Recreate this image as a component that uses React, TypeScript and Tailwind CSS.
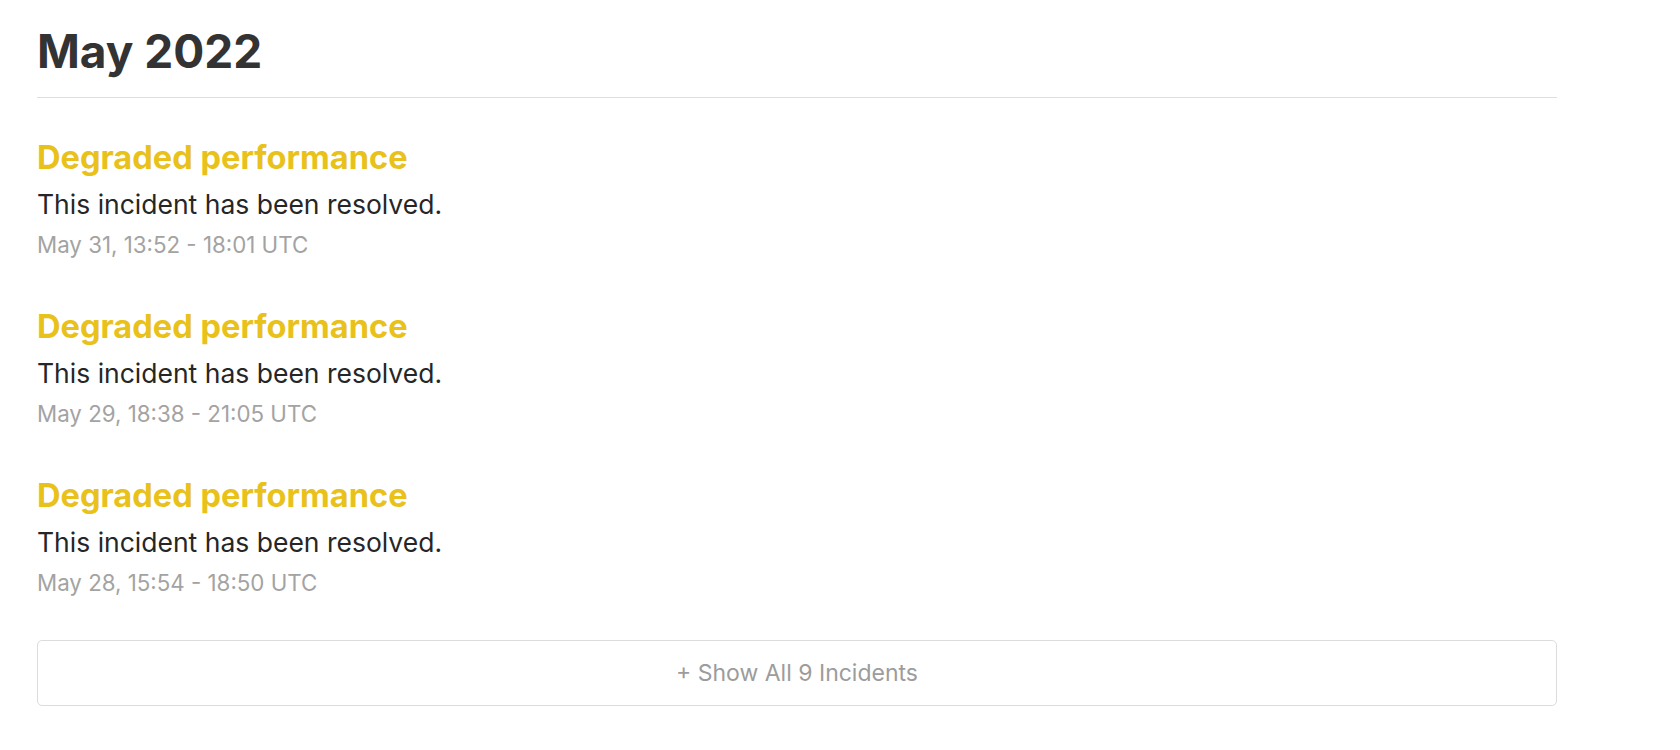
import React from "react";

const incidents = [
  { title: "Degraded performance", body: "This incident has been resolved.", date: "May 31, 13:52 - 18:01 UTC" },
  { title: "Degraded performance", body: "This incident has been resolved.", date: "May 29, 18:38 - 21:05 UTC" },
  { title: "Degraded performance", body: "This incident has been resolved.", date: "May 28, 15:54 - 18:50 UTC" },
];

export default function App() {
  return (
    <div className="min-h-[750px] w-full bg-white font-[Inter,sans-serif]">
      <div className="ml-[37px] w-[1520px] pt-[23px]">
        <h2 className="text-[46px] font-bold leading-[56px] text-[#333333] pb-[18px] border-b border-[#dedede]">
          May 2022
        </h2>
        <div className="pt-[39px] flex flex-col gap-[46px]">
          {incidents.map((it, i) => (
            <div key={i} className="flex flex-col">
              <div className="text-[32.6px] font-bold leading-[40px] text-[#e9c11b]">{it.title}</div>
              <div className="mt-[9px] text-[26.5px] leading-[36px] text-[#262626]">{it.body}</div>
              <div className="mt-[8px] text-[22.3px] leading-[30px] text-[#a3a3a3]">{it.date}</div>
            </div>
          ))}
        </div>
        <div className="mt-[42px] h-[66px] rounded-[5px] border border-[#dcdcdc] flex items-center justify-center text-[23px] text-[#9c9c9c]">
          + Show All 9 Incidents
        </div>
      </div>
    </div>
  );
}
